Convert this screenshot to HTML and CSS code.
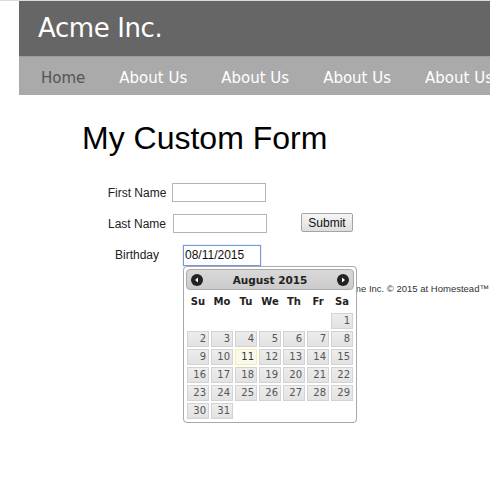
FILE: index.html
```html
<!DOCTYPE html>
<html>
<head>
<meta charset="utf-8">
<title>My Custom Form</title>
<link rel="stylesheet" href="styles.css">
</head>
<body>
<div class="page">
  <header class="header"><span class="brand">Acme Inc.</span></header>
  <nav class="nav">
    <a class="nav-item active">Home</a>
    <a class="nav-item">About Us</a>
    <a class="nav-item">About Us</a>
    <a class="nav-item">About Us</a>
    <a class="nav-item">About Us</a>
  </nav>
  <main class="content">
    <h1 class="title">My Custom Form</h1>
    <form class="form">
      <div class="row">
        <label class="label">First Name</label>
        <input class="input in-first" type="text">
      </div>
      <div class="row">
        <label class="label">Last Name</label>
        <input class="input in-last" type="text">
        <button class="submit" type="button">Submit</button>
      </div>
      <div class="row">
        <label class="label">Birthday</label>
        <input class="input in-birth" type="text" value="08/11/2015">
      </div>
    </form>
    <footer class="footer">Acme Inc. © 2015 at Homestead™</footer>
  </main>
</div>

<div class="datepicker">
  <div class="dp-header">
    <span class="dp-nav"><svg width="12" height="12" viewBox="0 0 12 12"><circle cx="6" cy="6" r="6" fill="#222"/><path d="M4 6 L7 3.6 L7 8.4 Z" fill="#fff"/></svg></span>
    <span class="dp-title">August 2015</span>
    <span class="dp-nav"><svg width="12" height="12" viewBox="0 0 12 12"><circle cx="6" cy="6" r="6" fill="#222"/><path d="M8 6 L5 3.6 L5 8.4 Z" fill="#fff"/></svg></span>
  </div>
  <table class="dp-table">
    <thead>
      <tr><th>Su</th><th>Mo</th><th>Tu</th><th>We</th><th>Th</th><th>Fr</th><th>Sa</th></tr>
    </thead>
    <tbody>
      <tr><td></td><td></td><td></td><td></td><td></td><td></td><td><a class="day">1</a></td></tr>
      <tr><td><a class="day">2</a></td><td><a class="day">3</a></td><td><a class="day">4</a></td><td><a class="day">5</a></td><td><a class="day">6</a></td><td><a class="day">7</a></td><td><a class="day">8</a></td></tr>
      <tr><td><a class="day">9</a></td><td><a class="day">10</a></td><td><a class="day today">11</a></td><td><a class="day">12</a></td><td><a class="day">13</a></td><td><a class="day">14</a></td><td><a class="day">15</a></td></tr>
      <tr><td><a class="day">16</a></td><td><a class="day">17</a></td><td><a class="day">18</a></td><td><a class="day">19</a></td><td><a class="day">20</a></td><td><a class="day">21</a></td><td><a class="day">22</a></td></tr>
      <tr><td><a class="day">23</a></td><td><a class="day">24</a></td><td><a class="day">25</a></td><td><a class="day">26</a></td><td><a class="day">27</a></td><td><a class="day">28</a></td><td><a class="day">29</a></td></tr>
      <tr><td><a class="day">30</a></td><td><a class="day">31</a></td><td></td><td></td><td></td><td></td><td></td></tr>
    </tbody>
  </table>
</div>
</body>
</html>
```
FILE: styles.css
```css
html, body {
  margin: 0;
  padding: 0;
  background: #fff;
}
body {
  border-top: 1px solid #dcdcdc;
  font-family: "Liberation Sans", Arial, sans-serif;
  color: #111;
  overflow: hidden;
}
.page {
  margin-left: 19px;
  overflow: hidden;
}
.header {
  height: 55px;
  background: #666;
  padding-left: 19px;
  display: flex;
  align-items: center;
}
.brand {
  font-family: "DejaVu Sans", Verdana, sans-serif;
  font-size: 26px;
  color: #fff;
  letter-spacing: -0.4px;
  line-height: 1;
  margin-top: -2px;
}
.nav {
  height: 39px;
  background: #aaa;
  border-top: 1px solid #9d9d9d;
  box-sizing: border-box;
  display: flex;
  align-items: center;
  gap: 34px;
  padding: 3px 0 0 22px;
  white-space: nowrap;
}
.nav-item {
  font-family: "DejaVu Sans", Verdana, sans-serif;
  font-size: 15px;
  color: #fff;
  flex: none;
}
.nav-item.active {
  color: #555;
}
.content {
  padding-left: 63px;
}
.title {
  margin: 23px 0 0;
  font-size: 32px;
  font-weight: normal;
  line-height: 40px;
  color: #000;
}
.form {
  margin: 25px 0 0 25px;
  display: flex;
  flex-direction: column;
  gap: 12px;
}
.row {
  display: flex;
  align-items: center;
  height: 19px;
}
.label {
  width: 60px;
  text-align: center;
  font-size: 12px;
  color: #222;
  flex: none;
}
.input {
  box-sizing: border-box;
  height: 19px;
  border: 1px solid #b5b5b5;
  background: #fff;
  padding: 0 1px;
  margin: 0;
  font-family: "Liberation Sans", Arial, sans-serif;
  font-size: 12px;
  color: #111;
  outline: none;
}
.in-first {
  width: 94px;
  margin-left: 5px;
}
.in-last {
  width: 94px;
  margin-left: 6px;
}
.in-birth {
  width: 78px;
  height: 21px;
  margin: 1px 0 0 16px;
  border-color: #6f9ad6;
  box-shadow: 0 0 1px #8db3e6;
}
.submit {
  box-sizing: border-box;
  height: 19px;
  width: 52px;
  margin: -2px 0 0 34px;
  padding: 0;
  border: 1px solid #a4a4a4;
  border-radius: 2px;
  background: linear-gradient(#f6f6f6, #dedede);
  font-family: "Liberation Sans", Arial, sans-serif;
  font-size: 12px;
  color: #111;
}
.footer {
  margin: 19px 0 0 260px;
  font-size: 9.5px;
  line-height: 12px;
  color: #333;
  white-space: nowrap;
}
.datepicker {
  position: absolute;
  left: 183px;
  top: 266px;
  width: 174px;
  box-sizing: border-box;
  padding: 2px;
  border: 1px solid #aaa;
  border-radius: 4px;
  background: #fff;
  box-shadow: 0 0 1px rgba(0,0,0,0.1);
  font-family: "DejaVu Sans", Verdana, sans-serif;
}
.dp-header {
  height: 21px;
  box-sizing: border-box;
  border: 1px solid #aaa;
  border-radius: 4px;
  background: linear-gradient(#d9d9d9, #cbcbcb);
  display: flex;
  align-items: center;
  justify-content: space-between;
  padding: 0 4px;
}
.dp-nav {
  display: flex;
  width: 12px;
  height: 12px;
}
.dp-title {
  font-weight: bold;
  font-size: 10.5px;
  color: #222;
}
.dp-table {
  width: 100%;
  border-collapse: collapse;
  table-layout: fixed;
  font-size: 10px;
}
.dp-table th {
  height: 22px;
  padding: 0;
  font-weight: bold;
  color: #222;
  text-align: center;
}
.dp-table td {
  padding: 1px;
  height: 16px;
}
.day {
  display: block;
  box-sizing: border-box;
  height: 16px;
  line-height: 14px;
  border: 1px solid #d3d3d3;
  background: linear-gradient(#ededed, #e2e2e2);
  color: #555;
  text-align: right;
  padding-right: 2px;
}
.day.today {
  border-color: #fcefa1;
  background: #fbf9ee;
  color: #363636;
}
```
